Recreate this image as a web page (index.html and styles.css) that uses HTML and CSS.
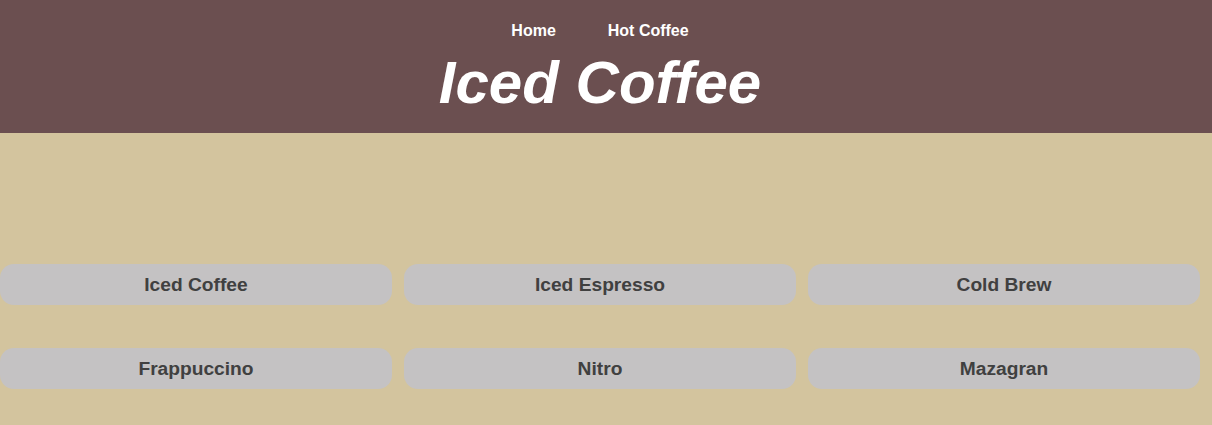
FILE: index.html
```html
<!DOCTYPE html>
<html lang="en">
<head>
<meta charset="utf-8">
<title>Iced Coffee</title>
<link rel="stylesheet" href="styles.css">
</head>
<body>
<header class="site-header">
  <div class="header-inner">
    <nav class="nav">
      <a class="nav-link" href="#">Home</a>
      <a class="nav-link" href="#">Hot Coffee</a>
    </nav>
    <h1 class="title">Iced Coffee</h1>
  </div>
</header>
<main class="content">
  <div class="grid">
    <div class="card">Iced Coffee</div>
    <div class="card">Iced Espresso</div>
    <div class="card">Cold Brew</div>
    <div class="card">Frappuccino</div>
    <div class="card">Nitro</div>
    <div class="card">Mazagran</div>
  </div>
</main>
</body>
</html>
```

FILE: styles.css
```css
html, body {
  margin: 0;
  padding: 0;
}
body {
  background: #d3c49e;
  font-family: "Liberation Sans", Arial, sans-serif;
  min-height: 425px;
}
.site-header {
  background: #6b4f50;
  height: 133px;
}
.header-inner {
  width: 1200px;
  display: flex;
  flex-direction: column;
  align-items: center;
  padding-top: 22px;
}
.nav {
  display: flex;
  gap: 52px;
  line-height: 18px;
}
.nav-link {
  color: #ffffff;
  font-weight: bold;
  font-size: 16px;
  text-decoration: none;
}
.title {
  margin: 8px 0 0;
  color: #ffffff;
  font-size: 60px;
  font-style: italic;
  font-weight: bold;
  line-height: 69px;
}
.content {
  width: 1200px;
  padding-top: 131px;
}
.grid {
  display: grid;
  grid-template-columns: repeat(3, 1fr);
  column-gap: 12px;
  row-gap: 43px;
}
.card {
  background: #c4c2c3;
  border-radius: 14px;
  height: 41px;
  display: flex;
  align-items: center;
  justify-content: center;
  color: #404040;
  font-weight: bold;
  font-size: 19.2px;
}
```
